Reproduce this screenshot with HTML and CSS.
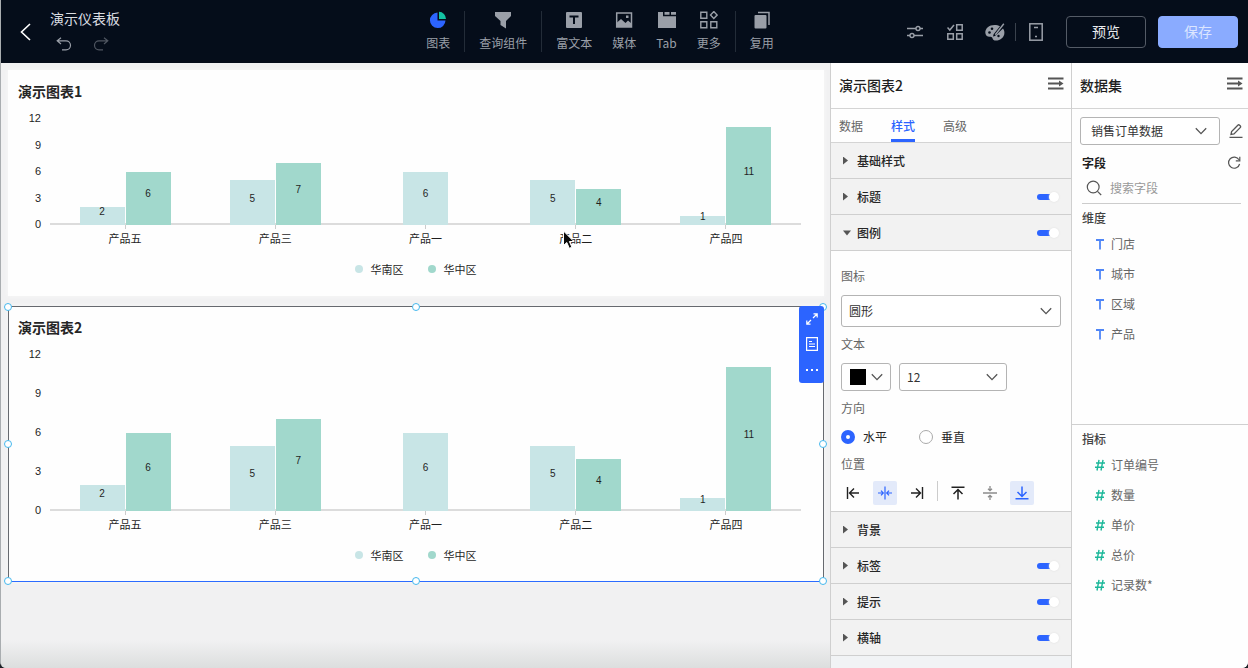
FILE: index.html
```html
<!DOCTYPE html>
<html lang="zh-CN">
<head>
<meta charset="utf-8">
<meta name="viewport" content="width=device-width, initial-scale=1">
<title>演示仪表板</title>
<link rel="stylesheet" href="styles.css">
</head>
<body>
<svg class="sprite" aria-hidden="true">
  <symbol id="chevron" viewBox="0 0 12 8"><path d="M.8 1.200 6 6.600l5.200-5.400" fill="none" stroke="currentColor" stroke-width="1.300"/></symbol>
  <symbol id="collapse" viewBox="0 0 16 13"><path d="M0 1.500h15.500M0 6.500h11M0 11.500h15.500" fill="none" stroke="currentColor" stroke-width="2.200"/><path d="M11 3.500 15.500 6.500 11 9.500z" fill="currentColor"/></symbol>
  <symbol id="dim" viewBox="0 0 10 12"><path d="M1 2h8M5 2v9.500" fill="none" stroke="currentColor" stroke-width="1.800"/></symbol>
  <symbol id="num" viewBox="0 0 10 12"><path d="M1 4h9M0 8.200h9M4 .8 2 11.500M8 .8 6 11.500" fill="none" stroke="currentColor" stroke-width="1.400"/></symbol>
</svg>
<div class="app">
  <header class="topbar">
    <div class="lead">
      <button class="icon-btn back" aria-label="返回"><svg width="11" height="18" viewBox="0 0 11 18"><path d="M10 1 1.500 9 10 17" fill="none" stroke="currentColor" stroke-width="1.600"/></svg></button>
      <div class="doc">
        <h1>演示仪表板</h1>
        <div class="history">
          <button class="icon-btn" aria-label="撤销"><svg width="16" height="14" viewBox="0 0 16 14"><path d="M5 .8 1.200 3.800 5 7M1.500 3.800H10a4.500 4.500 0 0 1 0 9H6" fill="none" stroke="currentColor" stroke-width="1.200"/></svg></button>
          <button class="icon-btn off" aria-label="重做"><svg width="16" height="14" viewBox="0 0 16 14"><path d="M11 .8 14.800 3.800 11 7M14.500 3.800H6a4.500 4.500 0 0 0 0 9h4" fill="none" stroke="currentColor" stroke-width="1.200"/></svg></button>
        </div>
      </div>
    </div>
    <nav class="insert">
      <div class="insert-group">
        <button class="tool"><svg width="18" height="18" viewBox="0 0 18 18"><path d="M8.500 1.500A7.800 7.800 0 1 0 16.500 9.500h-8z" fill="#2c64ff"/><path d="M10 .8A7.300 7.300 0 0 1 17 8h-7z" fill="#13c2a3"/></svg>图表</button>
      </div>
      <div class="insert-group">
        <button class="tool"><svg width="18" height="18" viewBox="0 0 18 18"><path d="M1 1h16v4l-5 5v7.500L6.500 14V10L1 5z" fill="currentColor"/></svg>查询组件</button>
      </div>
      <div class="insert-group">
        <button class="tool"><svg width="18" height="18" viewBox="0 0 18 18"><rect x="1" y="1" width="16" height="16" rx="1" fill="currentColor"/><path d="M4.500 5.500h9M9 5.500V13" stroke="#050d1a" stroke-width="2" fill="none"/></svg>富文本</button>
        <button class="tool"><svg width="18" height="18" viewBox="0 0 18 18"><rect x="1.700" y="2" width="14.800" height="14" fill="none" stroke="currentColor" stroke-width="1.500"/><path d="M2 11.500 6 8l4.500 4L13 9.500l3.500 3V16H2z" fill="currentColor"/><rect x="11" y="4.500" width="2.500" height="2.500" fill="currentColor"/></svg>媒体</button>
        <button class="tool"><svg width="20" height="18" viewBox="0 0 20 18"><path d="M1 1h5v4.200h13V17H1zM7.500 1h5v2.800h-5zM14 1h5v2.800h-5z" fill="currentColor"/></svg>Tab</button>
        <button class="tool"><svg width="18" height="18" viewBox="0 0 18 18"><path d="M.8 1.200h6v6h-6zM.8 10.800h6v6h-6zM10.800 10.800h6v6h-6zM13.800.6l3.300 3.500-3.300 3.500-3.300-3.500z" fill="none" stroke="currentColor" stroke-width="1.400"/></svg>更多</button>
      </div>
      <div class="insert-group">
        <button class="tool"><svg width="18" height="18" viewBox="0 0 18 18"><rect x="1.500" y="4" width="12" height="13.500" rx="1" fill="currentColor"/><path d="M5 1.500h11v12.500" fill="none" stroke="currentColor" stroke-width="1.500"/></svg>复用</button>
      </div>
    </nav>
    <div class="actions">
      <div class="action-icons">
        <button class="icon-btn sq" aria-label="参数设置"><svg width="16" height="14" viewBox="0 0 16 14"><path d="M0 3.500h9M13 3.500h3M0 10.500h3M7 10.500h9" stroke="currentColor" stroke-width="1.400"/><circle cx="11" cy="3.500" r="2" fill="none" stroke="currentColor" stroke-width="1.400"/><circle cx="5" cy="10.500" r="2" fill="none" stroke="currentColor" stroke-width="1.400"/></svg></button>
        <button class="icon-btn sq" aria-label="批量选择"><svg width="16" height="16" viewBox="0 0 16 16"><path d="M.5 3.500 2.800 6 7 1M9.700.8h5.500v5.500H9.700zM.8 9.700h5.500v5.500H.8zM9.700 9.700h5.500v5.500H9.700z" fill="none" stroke="currentColor" stroke-width="1.500"/></svg></button>
        <button class="icon-btn sq" aria-label="主题"><svg width="20" height="18" viewBox="0 0 20 18"><path d="M9.500 2C4 2 .3 5.500.3 9.500c0 3 2.200 4.500 4.500 4.300 1.800-.2 2.500.6 2.800 1.700.4 1.400 1.500 2 3 2 5 0 8.800-3.300 8.800-7.800 0-1.700-.5-3-1.400-4.200L10 13l-2 .5.600-2.300L15 3.200C13.500 2.400 11.500 2 9.500 2z" fill="currentColor"/><circle cx="4.500" cy="9.500" r="1.300" fill="#050d1a"/><circle cx="7" cy="5.800" r="1.300" fill="#050d1a"/><circle cx="13.500" cy="13" r="1.200" fill="#050d1a"/><path d="m18.800.8-8.500 11" stroke="currentColor" stroke-width="1.400"/></svg></button>
      </div>
      <span class="bar"></span>
      <button class="icon-btn sq" aria-label="移动端"><svg width="14" height="18" viewBox="0 0 14 18"><rect x=".8" y=".8" width="12.400" height="16.400" fill="none" stroke="currentColor" stroke-width="1.500"/><path d="M5 4.500h4M6 13.500h2" stroke="currentColor" stroke-width="1.500"/></svg></button>
      <div class="action-main">
        <button class="btn">预览</button>
        <button class="btn btn-primary">保存</button>
      </div>
    </div>
  </header>

  <main class="canvas">
    <section class="card">
      <h2>演示图表1</h2>
      <div class="chart short">
        <div class="yaxis"><span>12</span><span>9</span><span>6</span><span>3</span><span>0</span></div>
        <div class="plot">
          <div class="group"><div class="bar-a" style="height:16.67%">2</div><div class="bar-b" style="height:50%">6</div></div>
          <div class="group"><div class="bar-a" style="height:41.67%">5</div><div class="bar-b" style="height:58.33%">7</div></div>
          <div class="group"><div class="bar-a" style="height:50%">6</div></div>
          <div class="group"><div class="bar-a" style="height:41.67%">5</div><div class="bar-b" style="height:33.33%">4</div></div>
          <div class="group"><div class="bar-a" style="height:8.33%">1</div><div class="bar-b" style="height:91.67%">11</div></div>
        </div>
        <div class="xaxis"><span>产品五</span><span>产品三</span><span>产品一</span><span class="pointed">产品二<svg class="cursor" width="13" height="20" viewBox="0 0 13 20"><path d="M1.500 1v14.500l3.300-3 2.500 5.800 2.600-1.100-2.500-5.700h4.400z" fill="#0b0b0b" stroke="#fff" stroke-width="1"/></svg></span><span>产品四</span></div>
      </div>
      <ul class="legend"><li class="a">华南区</li><li class="b">华中区</li></ul>
    </section>

    <section class="card selected">
      <h2>演示图表2</h2>
      <div class="chart tall">
        <div class="yaxis"><span>12</span><span>9</span><span>6</span><span>3</span><span>0</span></div>
        <div class="plot">
          <div class="group"><div class="bar-a" style="height:16.67%">2</div><div class="bar-b" style="height:50%">6</div></div>
          <div class="group"><div class="bar-a" style="height:41.67%">5</div><div class="bar-b" style="height:58.33%">7</div></div>
          <div class="group"><div class="bar-a" style="height:50%">6</div></div>
          <div class="group"><div class="bar-a" style="height:41.67%">5</div><div class="bar-b" style="height:33.33%">4</div></div>
          <div class="group"><div class="bar-a" style="height:8.33%">1</div><div class="bar-b" style="height:91.67%">11</div></div>
        </div>
        <div class="xaxis"><span>产品五</span><span>产品三</span><span>产品一</span><span>产品二</span><span>产品四</span></div>
      </div>
      <ul class="legend"><li class="a">华南区</li><li class="b">华中区</li></ul>
      <i class="handle nw"></i><i class="handle n"></i><i class="handle ne"></i>
      <i class="handle w"></i><i class="handle e"></i>
      <i class="handle sw"></i><i class="handle s"></i><i class="handle se"></i>
      <div class="card-tools">
        <button class="icon-btn" aria-label="放大"><svg width="12" height="12" viewBox="0 0 12 12"><path d="M7 5 11 1M7.500.8h3.700v3.700M5 7 1 11M.8 7.500v3.700h3.700" fill="none" stroke="currentColor" stroke-width="1.200"/></svg></button>
        <button class="icon-btn" aria-label="查看数据"><svg width="12" height="14" viewBox="0 0 12 14"><path d="M.6.600h10.800v12.800H.6zM3 4.500h3M3 7h6M3 9.500h6" fill="none" stroke="currentColor" stroke-width="1.200"/></svg></button>
        <button class="icon-btn" aria-label="更多操作"><svg width="12" height="4" viewBox="0 0 12 4"><path d="M0 1h2v2H0zM5 1h2v2H5zM10 1h2v2h-2z" fill="currentColor"/></svg></button>
      </div>
    </section>
  </main>

  <aside class="panel settings">
    <div class="panel-head"><h2>演示图表2</h2><button class="icon-btn" aria-label="收起"><svg width="16" height="13"><use href="#collapse"/></svg></button></div>
    <div class="tabs" role="tablist">
      <button role="tab">数据</button><button role="tab" class="on" aria-selected="true">样式</button><button role="tab">高级</button>
    </div>
    <div class="row"><button class="fold">基础样式</button></div>
    <div class="row"><button class="fold">标题</button><input class="switch" type="checkbox" checked aria-label="标题"></div>
    <div class="row"><button class="fold open">图例</button><input class="switch" type="checkbox" checked aria-label="图例"></div>
    <div class="fields">
      <div class="field">
        <label for="shape">图标</label>
        <div class="select big"><select id="shape"><option>圆形</option></select><svg width="12" height="8"><use href="#chevron"/></svg></div>
      </div>
      <div class="field">
        <label for="size">文本</label>
        <div class="inline">
          <button class="color" aria-label="文本颜色"><span class="swatch"></span><svg width="12" height="8"><use href="#chevron"/></svg></button>
          <div class="select size"><select id="size"><option>12</option></select><svg width="12" height="8"><use href="#chevron"/></svg></div>
        </div>
      </div>
      <div class="field">
        <span class="caption">方向</span>
        <div class="radios">
          <label><input type="radio" name="dir" checked>水平</label>
          <label><input type="radio" name="dir">垂直</label>
        </div>
      </div>
      <div class="field tight">
        <span class="caption">位置</span>
        <div class="inline">
          <button class="pos" aria-label="左"><svg width="14" height="14" viewBox="0 0 14 14"><path d="M1.500 1v12M13 7H4M8 2.500 3.500 7 8 11.500" fill="none" stroke="currentColor" stroke-width="1.400"/></svg></button>
          <button class="pos on" aria-label="水平居中"><svg width="14" height="14" viewBox="0 0 14 14"><path d="M7 .5v13M0 7h5M3 4.700 5.300 7 3 9.300M14 7H9M11 4.700 8.700 7 11 9.300" fill="none" stroke="currentColor" stroke-width="1.200"/></svg></button>
          <button class="pos" aria-label="右"><svg width="14" height="14" viewBox="0 0 14 14"><path d="M12.500 1v12M1 7h9M6 2.500 10.500 7 6 11.500" fill="none" stroke="currentColor" stroke-width="1.400"/></svg></button>
          <span class="vline"></span>
          <button class="pos" aria-label="上"><svg width="14" height="14" viewBox="0 0 14 14"><path d="M.5 1.200h13M7 13.500V4M2.500 8 7 3.500 11.500 8" fill="none" stroke="currentColor" stroke-width="1.500"/></svg></button>
          <button class="pos dim" aria-label="垂直居中"><svg width="14" height="14" viewBox="0 0 14 14"><path d="M0 7h14M7 0v4.500M5 2.700l2 2 2-2M7 14V9.500M5 11.300l2-2 2 2" fill="none" stroke="currentColor" stroke-width="1.300"/></svg></button>
          <button class="pos on" aria-label="下"><svg width="14" height="14" viewBox="0 0 14 14"><path d="M.5 12.800h13M7 .5V10M2.500 6 7 10.500 11.500 6" fill="none" stroke="currentColor" stroke-width="1.500"/></svg></button>
        </div>
      </div>
    </div>
    <div class="row"><button class="fold">背景</button></div>
    <div class="row"><button class="fold">标签</button><input class="switch" type="checkbox" checked aria-label="标签"></div>
    <div class="row"><button class="fold">提示</button><input class="switch" type="checkbox" checked aria-label="提示"></div>
    <div class="row"><button class="fold">横轴</button><input class="switch" type="checkbox" checked aria-label="横轴"></div>
    <div class="rest"></div>
  </aside>

  <aside class="panel data">
    <div class="panel-head"><h2>数据集</h2><button class="icon-btn" aria-label="收起"><svg width="16" height="13"><use href="#collapse"/></svg></button></div>
    <div class="source">
      <div class="select grow"><select aria-label="数据集"><option>销售订单数据</option></select><svg width="12" height="8"><use href="#chevron"/></svg></div>
      <button class="icon-btn" aria-label="编辑"><svg width="14" height="14" viewBox="0 0 14 14"><path d="M.5 13.300h13M2 10.500l.6-3L8.800 1.200a1.300 1.300 0 0 1 1.800 0l.6.600a1.300 1.300 0 0 1 0 1.800L5 9.900z" fill="none" stroke="currentColor" stroke-width="1.300"/></svg></button>
    </div>
    <div class="fields-head"><h3>字段</h3><button class="icon-btn" aria-label="刷新"><svg width="14" height="14" viewBox="0 0 14 14"><path d="M12 3.800A5.600 5.600 0 1 0 12.600 8M12.800.8v4H8.800" fill="none" stroke="currentColor" stroke-width="1.200"/></svg></button></div>
    <div class="search"><svg width="16" height="16" viewBox="0 0 16 16"><circle cx="7.200" cy="7" r="5.900" fill="none" stroke="currentColor" stroke-width="1.200"/><path d="m11.500 11.300 3.700 3.700" stroke="currentColor" stroke-width="1.200"/></svg><input type="text" placeholder="搜索字段" aria-label="搜索字段"></div>
    <section class="list dims">
      <h4>维度</h4>
      <ul>
        <li><svg width="10" height="12"><use href="#dim"/></svg>门店</li>
        <li><svg width="10" height="12"><use href="#dim"/></svg>城市</li>
        <li><svg width="10" height="12"><use href="#dim"/></svg>区域</li>
        <li><svg width="10" height="12"><use href="#dim"/></svg>产品</li>
      </ul>
    </section>
    <section class="list nums">
      <h4>指标</h4>
      <ul>
        <li><svg width="10" height="12"><use href="#num"/></svg>订单编号</li>
        <li><svg width="10" height="12"><use href="#num"/></svg>数量</li>
        <li><svg width="10" height="12"><use href="#num"/></svg>单价</li>
        <li><svg width="10" height="12"><use href="#num"/></svg>总价</li>
        <li><svg width="10" height="12"><use href="#num"/></svg>记录数*</li>
      </ul>
    </section>
  </aside>
</div>
</body>
</html>
```

FILE: styles.css
```css
* { box-sizing: border-box; }

body {
  margin: 0;
  background: #1c2126;
  font: 12px/20px "Noto Sans CJK SC", "Noto Sans", sans-serif;
  color: #262626;
}

h1, h2, h3, h4, ul { margin: 0; padding: 0; font-size: inherit; }
ul { list-style: none; }
button, select, input { font: inherit; color: inherit; margin: 0; }
button { padding: 0; border: 0; background: none; }
svg { display: block; flex: none; }
.sprite { position: absolute; width: 0; height: 0; }
.icon-btn { display: flex; align-items: center; justify-content: center; }

.app {
  height: 100vh;
  display: grid;
  grid-template: auto minmax(0, 1fr) / minmax(0, 1fr) 241px 177px;
  border-left: 1px solid #a9adb0;
  border-radius: 0 0 6px 6px;
  overflow: hidden;
  background: #f1f1f2;
}

/* Top bar */
.topbar {
  grid-column: 1 / -1;
  display: flex;
  align-items: center;
  height: 63px;
  padding: 0 10px 0 19px;
  background: #050d1a;
  color: #9a9fa8;
}
.lead, .actions { flex: 1; display: flex; align-items: center; }
.lead { gap: 19px; }
.back { color: #fff; }
.doc { display: grid; gap: 9px; padding-bottom: 5px; }
.doc h1 { font-size: 14px; font-weight: 400; color: #d9dce0; }
.history { display: flex; gap: 21px; padding-left: 6px; }
.off { opacity: .5; }
.insert { display: flex; margin-right: 58px; }
.insert-group { display: flex; gap: 20px; padding: 0 14px; }
.insert-group + .insert-group { border-left: 1px solid #232c38; }
.tool { display: grid; justify-items: center; align-content: end; gap: 5px; height: 41px; line-height: 18px; }
.actions { justify-content: flex-end; }
.action-icons { display: flex; gap: 20px; }
.sq { width: 20px; height: 20px; }
.bar { width: 1px; height: 18px; margin: 0 10px; background: #3a424d; }
.action-main { display: flex; gap: 12px; margin-left: 20px; }
.btn {
  width: 80px;
  height: 32px;
  padding-bottom: 2px;
  border: 1px solid #545b66;
  border-radius: 4px;
  font-size: 14px;
  color: #e8eaed;
}
.btn-primary { background: #8aabff; border-color: #8aabff; color: #dbe5ff; }

/* Canvas */
.canvas {
  display: flex;
  flex-direction: column;
  gap: 10px;
  padding: 7px 6px 0 7px;
  overflow: hidden;
  background: linear-gradient(to top, #dcdede, #f1f1f2 28px);
}
.card {
  position: relative;
  flex: none;
  padding: 10px 22px 16px 9px;
  border: 1px solid #fefefe;
  background: #fefefe;
  box-shadow: 0 0 4px #f8f8f8;
}
.card.selected { border-color: #66696f; border-bottom-color: #2c6cff; }
.card h2 { font-size: 14px; font-weight: 700; }
.chart {
  display: grid;
  grid-template-columns: 23px minmax(0, 1fr);
  column-gap: 9px;
  margin-top: 17px;
  color: #1f1f1f;
}
.yaxis {
  display: flex;
  flex-direction: column;
  justify-content: space-between;
  margin: -7px 0 -6px;
  text-align: right;
  font: 11px/14px "Liberation Sans", sans-serif;
}
.plot {
  display: grid;
  grid-template-columns: repeat(5, minmax(0, 1fr));
  background: linear-gradient(#dcdcdc, #dcdcdc) bottom / 100% 2px no-repeat;
}
.short .plot { height: 107px; }
.tall .plot { height: 157px; }
.group { display: flex; justify-content: center; align-items: flex-end; gap: 1px; min-height: 0; }
.bar-a, .bar-b {
  display: flex;
  align-items: center;
  justify-content: center;
  width: 30%;
  padding-bottom: 8px;
  background: #c8e5e6;
  font: 10px/12px "Liberation Sans", sans-serif;
}
.bar-b { background: #a1d8cc; }
.xaxis {
  grid-column: 2;
  display: grid;
  grid-template-columns: repeat(5, minmax(0, 1fr));
  padding-bottom: 6px;
  text-align: center;
  font-size: 11px;
  line-height: 18px;
}
.xaxis span { padding-top: 4px; background: linear-gradient(#ccc, #ccc) top / 1px 4px no-repeat; }
.pointed { position: relative; }
.cursor { position: absolute; left: 61px; top: 5px; }
.legend { display: flex; justify-content: center; gap: 24px; padding: 6px 0 0 12px; font-size: 11px; line-height: 20px; }
.legend li { display: flex; align-items: center; gap: 8px; }
.legend li::before { content: ""; width: 8px; height: 8px; border-radius: 50%; background: #c8e5e6; }
.legend .b::before { background: #a1d8cc; }

.handle { position: absolute; width: 8px; height: 8px; border: 1px solid #45b8ee; border-radius: 50%; background: #fff; }
.nw, .n, .ne { top: -4px; }
.w, .e { top: calc(50% - 4px); }
.sw, .s, .se { bottom: -4px; }
.nw, .w, .sw { left: -5px; }
.n, .s { left: calc(50% - 4px); }
.ne, .e, .se { right: -4px; }

.card-tools {
  position: absolute;
  top: -1px;
  right: -1px;
  display: grid;
  grid-template-rows: repeat(3, 1fr);
  justify-items: center;
  width: 25px;
  height: 77px;
  border-radius: 3px;
  background: #2c64ff;
  color: #fff;
}

/* Side panels */
.panel { display: flex; flex-direction: column; overflow: hidden; background: #fefefe; border-left: 1px solid #cfcfcf; }
.panel > * { flex: none; }
.panel-head {
  display: flex;
  justify-content: space-between;
  align-items: flex-start;
  height: 46px;
  padding: 12px 7px 0 8px;
  border-bottom: 1px solid #d4d4d4;
  color: #555;
}
.panel-head h2 { font-size: 14px; font-weight: 500; color: #1f1f1f; }
.panel-head .icon-btn { padding-top: 2px; }
.data .panel-head { padding-right: 5px; }

.tabs { display: flex; gap: 28px; height: 34px; padding: 0 8px; border-bottom: 1px solid #d4d4d4; color: #666; }
.tabs button { padding-top: 3px; border-bottom: 3px solid transparent; }
.tabs .on { color: #2c64ff; border-color: #2c64ff; font-weight: 500; }

.row {
  display: flex;
  align-items: center;
  justify-content: space-between;
  height: 36px;
  padding: 0 12px 0 12px;
  border-bottom: 1px solid #cfcfcf;
  background: #f2f2f2;
}
.fold { display: flex; align-items: center; font-weight: 500; }
.fold::before {
  content: "";
  width: 14px;
  height: 8px;
  background: #555;
  clip-path: polygon(0 0, 5px 4px, 0 8px);
}
.fold.open::before { clip-path: polygon(0 2px, 8px 2px, 4px 7px); }
.switch {
  appearance: none;
  position: relative;
  width: 22px;
  height: 12px;
}
.switch::before {
  content: "";
  position: absolute;
  left: 0;
  top: 3px;
  width: 16px;
  height: 6px;
  border-radius: 3px;
  background: #2c64ff;
}
.switch::after {
  content: "";
  position: absolute;
  right: 0;
  top: 1px;
  width: 10px;
  height: 10px;
  border-radius: 50%;
  background: #fff;
  box-shadow: 0 0 2px #ddd;
}

.fields { display: grid; gap: 7px; padding: 15px 10px 6px 10px; border-bottom: 1px solid #cfcfcf; }
.field { display: grid; gap: 9px; }
.field.tight { gap: 7px; }
.field > label, .caption { color: #666; }
.inline { display: flex; gap: 8px; }
.select { position: relative; display: flex; align-items: center; height: 28px; color: #333; }
.select select {
  appearance: none;
  width: 100%;
  height: 100%;
  padding: 0 30px 0 7px;
  border: 1px solid #b4b4b4;
  border-radius: 3px;
  background: #fff;
}
.select svg { position: absolute; right: 9px; color: #555; pointer-events: none; }
.big { height: 32px; }
.size { width: 108px; }
.color {
  display: flex;
  align-items: center;
  justify-content: space-between;
  width: 50px;
  height: 28px;
  padding: 0 7px 0 8px;
  border: 1px solid #b4b4b4;
  border-radius: 3px;
  color: #555;
}
.swatch { width: 16px; height: 16px; background: #000; }
.radios { display: flex; gap: 32px; }
.radios label { display: flex; align-items: center; gap: 8px; }
.radios input { appearance: none; width: 14px; height: 14px; border: 1px solid #aaa; border-radius: 50%; background: #fff; }
.radios input:checked { border: 5px solid #2c64ff; }
.pos { display: grid; place-items: center; width: 24px; height: 24px; border-radius: 2px; color: #222; }
.pos.on { background: #e3eafa; color: #2c64ff; }
.pos.dim { color: #8c8c8c; }
.vline { width: 1px; height: 20px; background: #ccc; }
.panel > .rest { flex: 1; background: #f1f3f5; }

/* Data panel */
.source { display: flex; align-items: center; gap: 9px; padding: 8px 5px 0 8px; color: #555; }
.grow { flex: 1; }
.grow select { padding-left: 10px; }
.grow svg { right: 13px; }
.fields-head { display: flex; align-items: center; justify-content: space-between; padding: 8px 7px 0 10px; color: #555; }
.fields-head h3 { font-weight: 700; color: #1f1f1f; }
.search {
  display: flex;
  align-items: center;
  gap: 8px;
  height: 31px;
  margin: 0 7px 0 10px;
  padding-left: 4px;
  border-bottom: 1px solid #ccc;
  color: #555;
}
.search input { width: 100%; min-width: 0; padding: 0; border: 0; outline: 0; background: none; }
.search input::placeholder { color: #999; opacity: 1; }
.list { padding: 4px 10px 0; color: #666; }
.panel > .dims { flex: 9 1 0; }
.panel > .nums { flex: 10 1 0; border-top: 1px solid #d0d0d0; }
.list h4 { font-weight: 500; color: #444; }
.list ul { padding: 1px 0 0 13px; }
.list li { display: flex; align-items: center; gap: 6px; height: 30px; }
.dims svg { color: #4f86f7; }
.nums svg { color: #1cb89a; }
```
